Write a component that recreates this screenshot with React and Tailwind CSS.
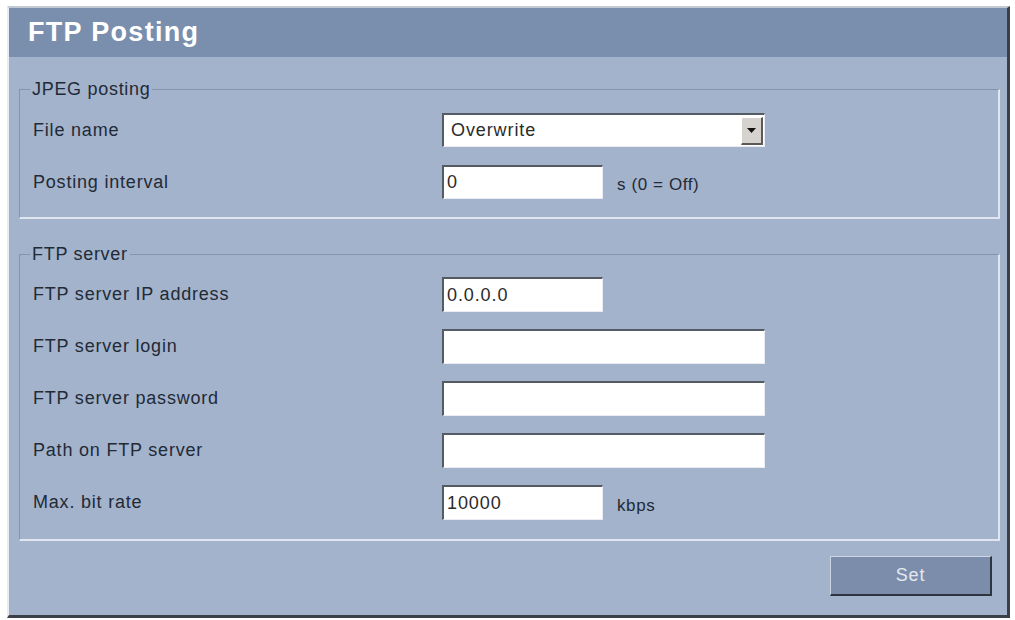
import React from 'react';

const Field = ({ label, children }) => (
  <div className="flex items-center h-[34px]">
    <div className="w-[422px] pl-[13px] text-[18px] tracking-[0.8px] text-[#222a36]">{label}</div>
    {children}
  </div>
);

const TextBox = ({ value = '', wide }) => (
  <div
    className={`${wide ? 'w-[323px]' : 'w-[161px]'} h-full bg-white border-t-2 border-l-2 border-b border-r border-t-[#555b64] border-l-[#555b64] border-b-[#e9edf3] border-r-[#e9edf3] pl-[3px] flex items-center text-[18px] tracking-[0.9px] text-[#2b2b2b]`}
  >
    {value}
  </div>
);

const Unit = ({ children }) => (
  <span className="ml-[14px] mt-[6px] text-[17px] tracking-[0.6px] text-[#222a36]">{children}</span>
);

const App = () => {
  return (
    <div className="min-h-screen bg-white pt-[6px] pl-[7px] font-['Liberation_Sans',Arial,sans-serif]">
      <div className="w-[1003px] bg-[#a3b3cc] border-t-2 border-l-2 border-r-[3px] border-b-[3px] border-t-[#c3c9d2] border-l-[#e9edf2] border-r-[#3a3f48] border-b-[#3a3f48]">
        {/* Header */}
        <div className="h-[49px] bg-[#7a8eae] pl-[19px] flex items-center">
          <h1 className="text-[27px] font-bold tracking-[1.3px] text-white">FTP Posting</h1>
        </div>

        <div className="pl-[10px] pr-[7px] pb-[19px]">
          {/* JPEG posting */}
          <fieldset className="mt-[22px] border-t border-l border-b-2 border-r-2 border-t-[#8594ae] border-l-[#8594ae] border-b-[#dfe6f0] border-r-[#dfe6f0]">
            <legend className="ml-[10px] px-[2px] text-[18px] leading-[20px] tracking-[0.7px] text-[#222a36]">JPEG posting</legend>
            <div className="pt-[14px] pb-[18px] flex flex-col gap-[18px]">
              <Field label="File name">
                <div className="w-[323px] h-full bg-white border-t-2 border-l-2 border-b border-r border-t-[#555b64] border-l-[#555b64] border-b-[#e9edf3] border-r-[#e9edf3] flex items-center">
                  <span className="flex-1 pl-[7px] text-[18px] tracking-[0.9px] text-[#2b2b2b]">Overwrite</span>
                  <div className="w-[22px] h-[28px] mr-[1px] bg-[#d6d3ce] border-t border-l border-b-2 border-r-2 border-t-white border-l-white border-b-[#5a5a5a] border-r-[#5a5a5a] flex items-center justify-center">
                    <svg width="9" height="5" viewBox="0 0 9 5"><path d="M0 0h9L4.5 5z" fill="#111" /></svg>
                  </div>
                </div>
              </Field>
              <Field label="Posting interval">
                <TextBox value="0" />
                <Unit>s (0 = Off)</Unit>
              </Field>
            </div>
          </fieldset>

          {/* FTP server */}
          <fieldset className="mt-[25px] border-t border-l border-b-2 border-r-2 border-t-[#8594ae] border-l-[#8594ae] border-b-[#dfe6f0] border-r-[#dfe6f0]">
            <legend className="ml-[10px] px-[2px] text-[18px] leading-[20px] tracking-[0.7px] text-[#222a36]">FTP server</legend>
            <div className="pt-[13px] pb-[19px] flex flex-col gap-[17px] [&>div]:h-[35px]">
              <Field label="FTP server IP address">
                <TextBox value="0.0.0.0" />
              </Field>
              <Field label="FTP server login">
                <TextBox wide />
              </Field>
              <Field label="FTP server password">
                <TextBox wide />
              </Field>
              <Field label="Path on FTP server">
                <TextBox wide />
              </Field>
              <Field label="Max. bit rate">
                <TextBox value="10000" />
                <Unit>kbps</Unit>
              </Field>
            </div>
          </fieldset>

          <div className="mt-[15px] flex justify-end pr-[8px]">
            <button className="w-[162px] h-[40px] bg-[#7b8dab] border-t border-l border-b-2 border-r-2 border-t-[#cdd6e3] border-l-[#cdd6e3] border-b-[#2f3540] border-r-[#2f3540] text-[18px] tracking-[0.8px] text-[#e3e8f0]">
              Set
            </button>
          </div>
        </div>
      </div>
    </div>
  );
};

export default App;
